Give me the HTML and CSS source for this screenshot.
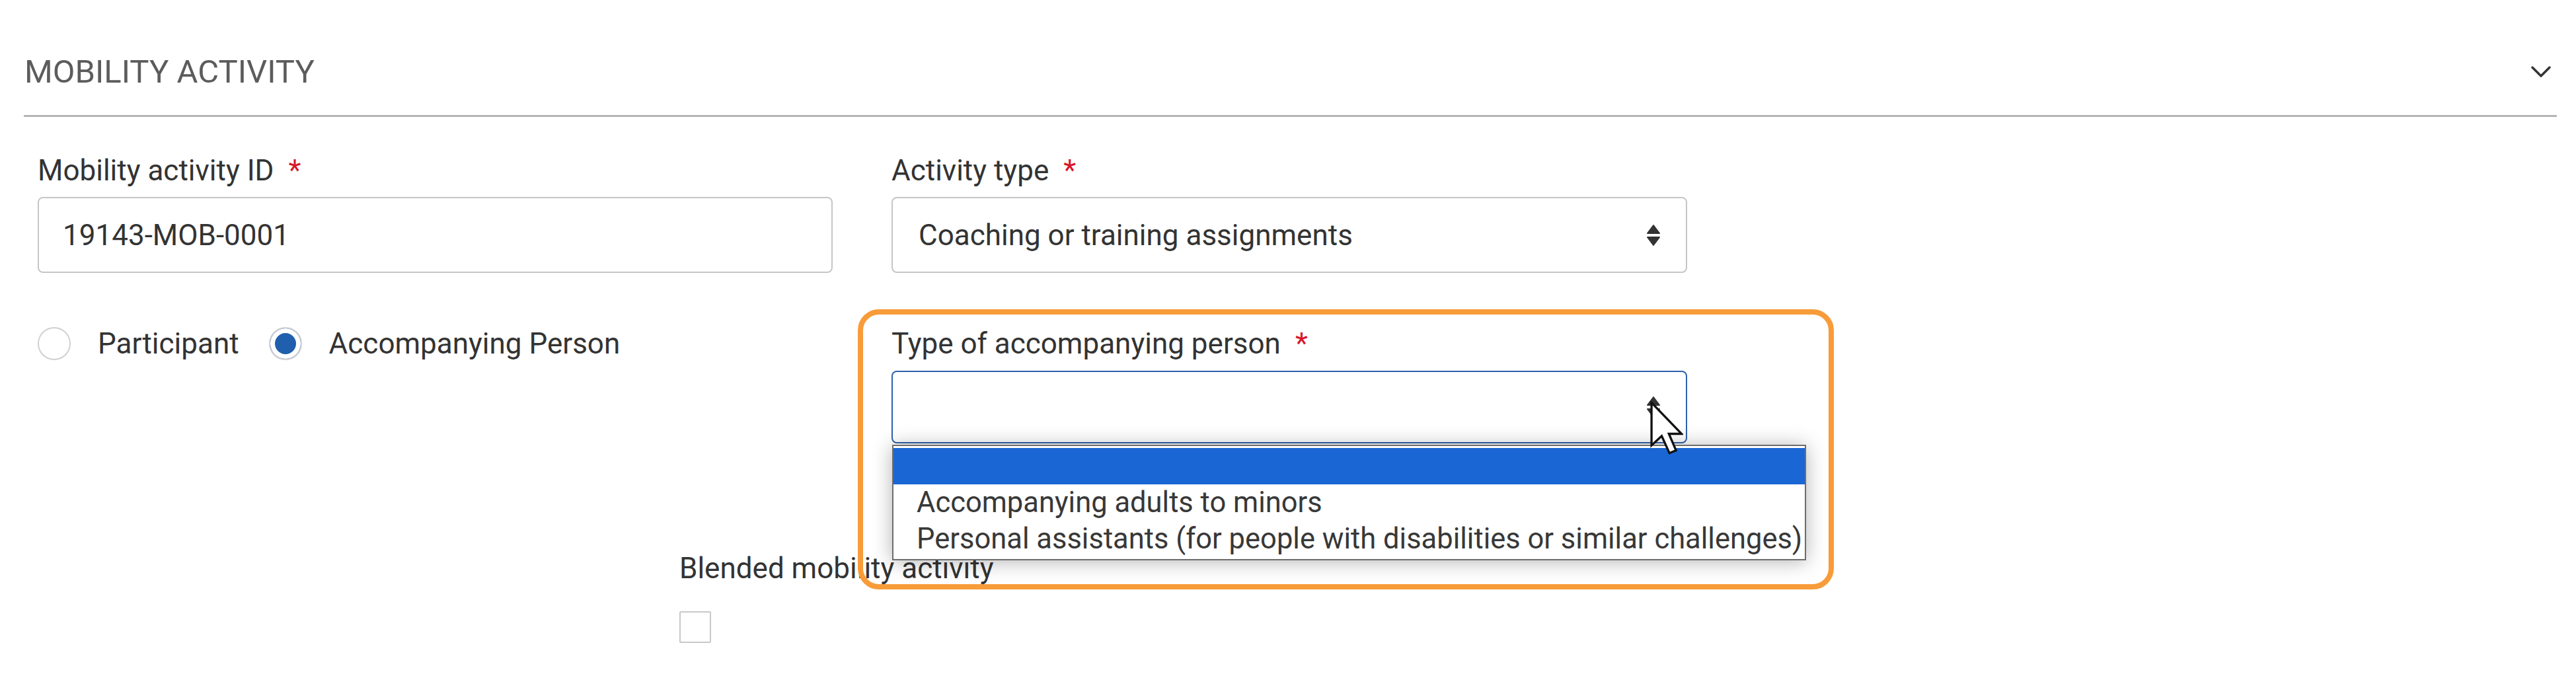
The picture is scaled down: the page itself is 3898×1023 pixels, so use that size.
FILE: index.html
```html
<!DOCTYPE html>
<html lang="en">
<head>
<meta charset="utf-8">
<title>Mobility activity</title>
<link rel="stylesheet" href="styles.css">
</head>
<body>
<div class="page">
  <div class="section-head">
    <h2 class="section-title">MOBILITY ACTIVITY</h2>
    <svg class="chevron" viewBox="0 0 32 20" width="32" height="20" aria-hidden="true">
      <polyline points="3,3 16,16 29,3" fill="none" stroke="#333" stroke-width="3.5" stroke-linecap="round" stroke-linejoin="round"/>
    </svg>
  </div>

  <div class="form">
    <div class="row row-first">
      <div class="field">
        <div class="field-label">Mobility activity ID<span class="req">*</span></div>
        <div class="control input">19143-MOB-0001</div>
      </div>
      <div class="field">
        <div class="field-label">Activity type<span class="req">*</span></div>
        <div class="control select">
          <span>Coaching or training assignments</span>
          <svg class="updown" viewBox="0 0 22 34" width="22" height="34" aria-hidden="true">
            <path d="M11 2 L20 14 H2 Z" fill="#333" stroke="#333" stroke-width="2" stroke-linejoin="round"/>
            <path d="M2 20 H20 L11 32 Z" fill="#333" stroke="#333" stroke-width="2" stroke-linejoin="round"/>
          </svg>
        </div>
      </div>
    </div>

    <div class="row row-second">
      <div class="radios">
        <div class="radio-option"><span class="radio"></span><span>Participant</span></div>
        <div class="radio-option"><span class="radio checked"></span><span>Accompanying Person</span></div>
      </div>
      <div class="field field-focus">
        <div class="field-label">Type of accompanying person<span class="req">*</span></div>
        <div class="control select select-open">
          <span></span>
          <svg class="updown" viewBox="0 0 22 34" width="22" height="34" aria-hidden="true">
            <path d="M11 2 L20 14 H2 Z" fill="#333" stroke="#333" stroke-width="2" stroke-linejoin="round"/>
            <path d="M2 20 H20 L11 32 Z" fill="#333" stroke="#333" stroke-width="2" stroke-linejoin="round"/>
          </svg>
          <ul class="dropdown">
            <li class="option option-active">&nbsp;</li>
            <li class="option">Accompanying adults to minors</li>
            <li class="option">Personal assistants (for people with disabilities or similar challenges)</li>
          </ul>
          <svg class="cursor" viewBox="0 0 12 20" width="50" height="84" aria-hidden="true">
            <path d="M0.5 0.5 L0.5 16 L4.2 12.6 L7 18.8 L9.4 17.8 L6.8 11.8 L11.4 11.8 Z" fill="#fff" stroke="#111" stroke-width="0.8" stroke-linejoin="miter"/>
          </svg>
        </div>
        <div class="annotation"></div>
      </div>
    </div>

    <div class="blended">
      <div class="field-label">Blended mobility activity</div>
      <span class="checkbox"></span>
    </div>
  </div>
</div>
</body>
</html>
```

FILE: styles.css
```css
* {
  box-sizing: border-box;
}

html,
body {
  margin: 0;
  background: #fff;
}

body {
  font-family: Roboto, "Liberation Sans", Arial, sans-serif;
  color: #333;
}

.page {
  width: 3898px;
  height: 1023px;
  padding: 0 29px 0 36px;
  overflow: hidden;
}

.section-head {
  display: flex;
  align-items: center;
  justify-content: space-between;
  height: 177px;
  padding-top: 44px;
  border-bottom: 3px solid #b5b5b5;
}

.section-title {
  margin: 0 0 0 1px;
  font-size: 49px;
  font-weight: 400;
  line-height: 60px;
  color: #5c5c5c;
}

.chevron {
  margin-right: 8px;
}

.form {
  padding-left: 21px;
}

.row {
  display: grid;
  grid-template-columns: 1203px 1204px;
  column-gap: 89px;
}

.row-first {
  margin-top: 55px;
}

.row-second {
  margin-top: 81px;
}

.field-label {
  font-size: 44px;
  line-height: 52px;
  color: #333;
  margin-bottom: 14px;
  white-space: nowrap;
}

.req {
  color: #d7182a;
  margin-left: 22px;
}

.control {
  display: flex;
  align-items: center;
  justify-content: space-between;
  height: 115px;
  border: 2px solid #c6c6c6;
  border-radius: 8px;
  font-size: 44px;
  color: #333;
  background: #fff;
}

.input {
  padding-left: 36px;
}

.select {
  padding: 0 38px 0 39px;
}

.radios {
  display: flex;
  align-items: center;
  gap: 45px;
  height: 52px;
  font-size: 44px;
  color: #333;
}

.radio-option {
  display: flex;
  align-items: center;
  gap: 41px;
}

.radio {
  width: 50px;
  height: 50px;
  border: 2px solid #d0d0d0;
  border-radius: 50%;
  background: #fff;
}

.radio.checked {
  background: #1f5fad;
  box-shadow: inset 0 0 0 7px #fff;
}

.field-focus {
  position: relative;
}

.field-focus .field-label {
  margin-bottom: 15px;
}

.select-open {
  position: relative;
  height: 110px;
  border-color: #2d62ab;
}

.dropdown {
  position: absolute;
  top: 110px;
  left: -1px;
  z-index: 2;
  margin: 0;
  padding: 3px 0;
  list-style: none;
  background: #fff;
  border: 2px solid #6d6d6d;
  box-shadow: 0 2px 28px rgba(0, 0, 0, 0.3);
  white-space: nowrap;
}

.option {
  height: 55px;
  line-height: 55px;
  padding: 0 4px 0 35px;
  font-size: 43.5px;
  color: #383838;
}

.option-active {
  background: #1a66d4;
}

.cursor {
  position: absolute;
  left: 1146px;
  top: 44px;
  z-index: 3;
}

.annotation {
  position: absolute;
  left: -51px;
  top: -26px;
  width: 1477px;
  height: 424px;
  border: 8px solid #f89b39;
  border-radius: 32px;
  z-index: 4;
  pointer-events: none;
}

.blended {
  margin-top: 163px;
  padding-left: 971px;
}

.blended .field-label {
  margin-bottom: 39px;
}

.checkbox {
  display: block;
  width: 48px;
  height: 48px;
  border: 2px solid #c8c8c8;
  border-radius: 2px;
}
```
